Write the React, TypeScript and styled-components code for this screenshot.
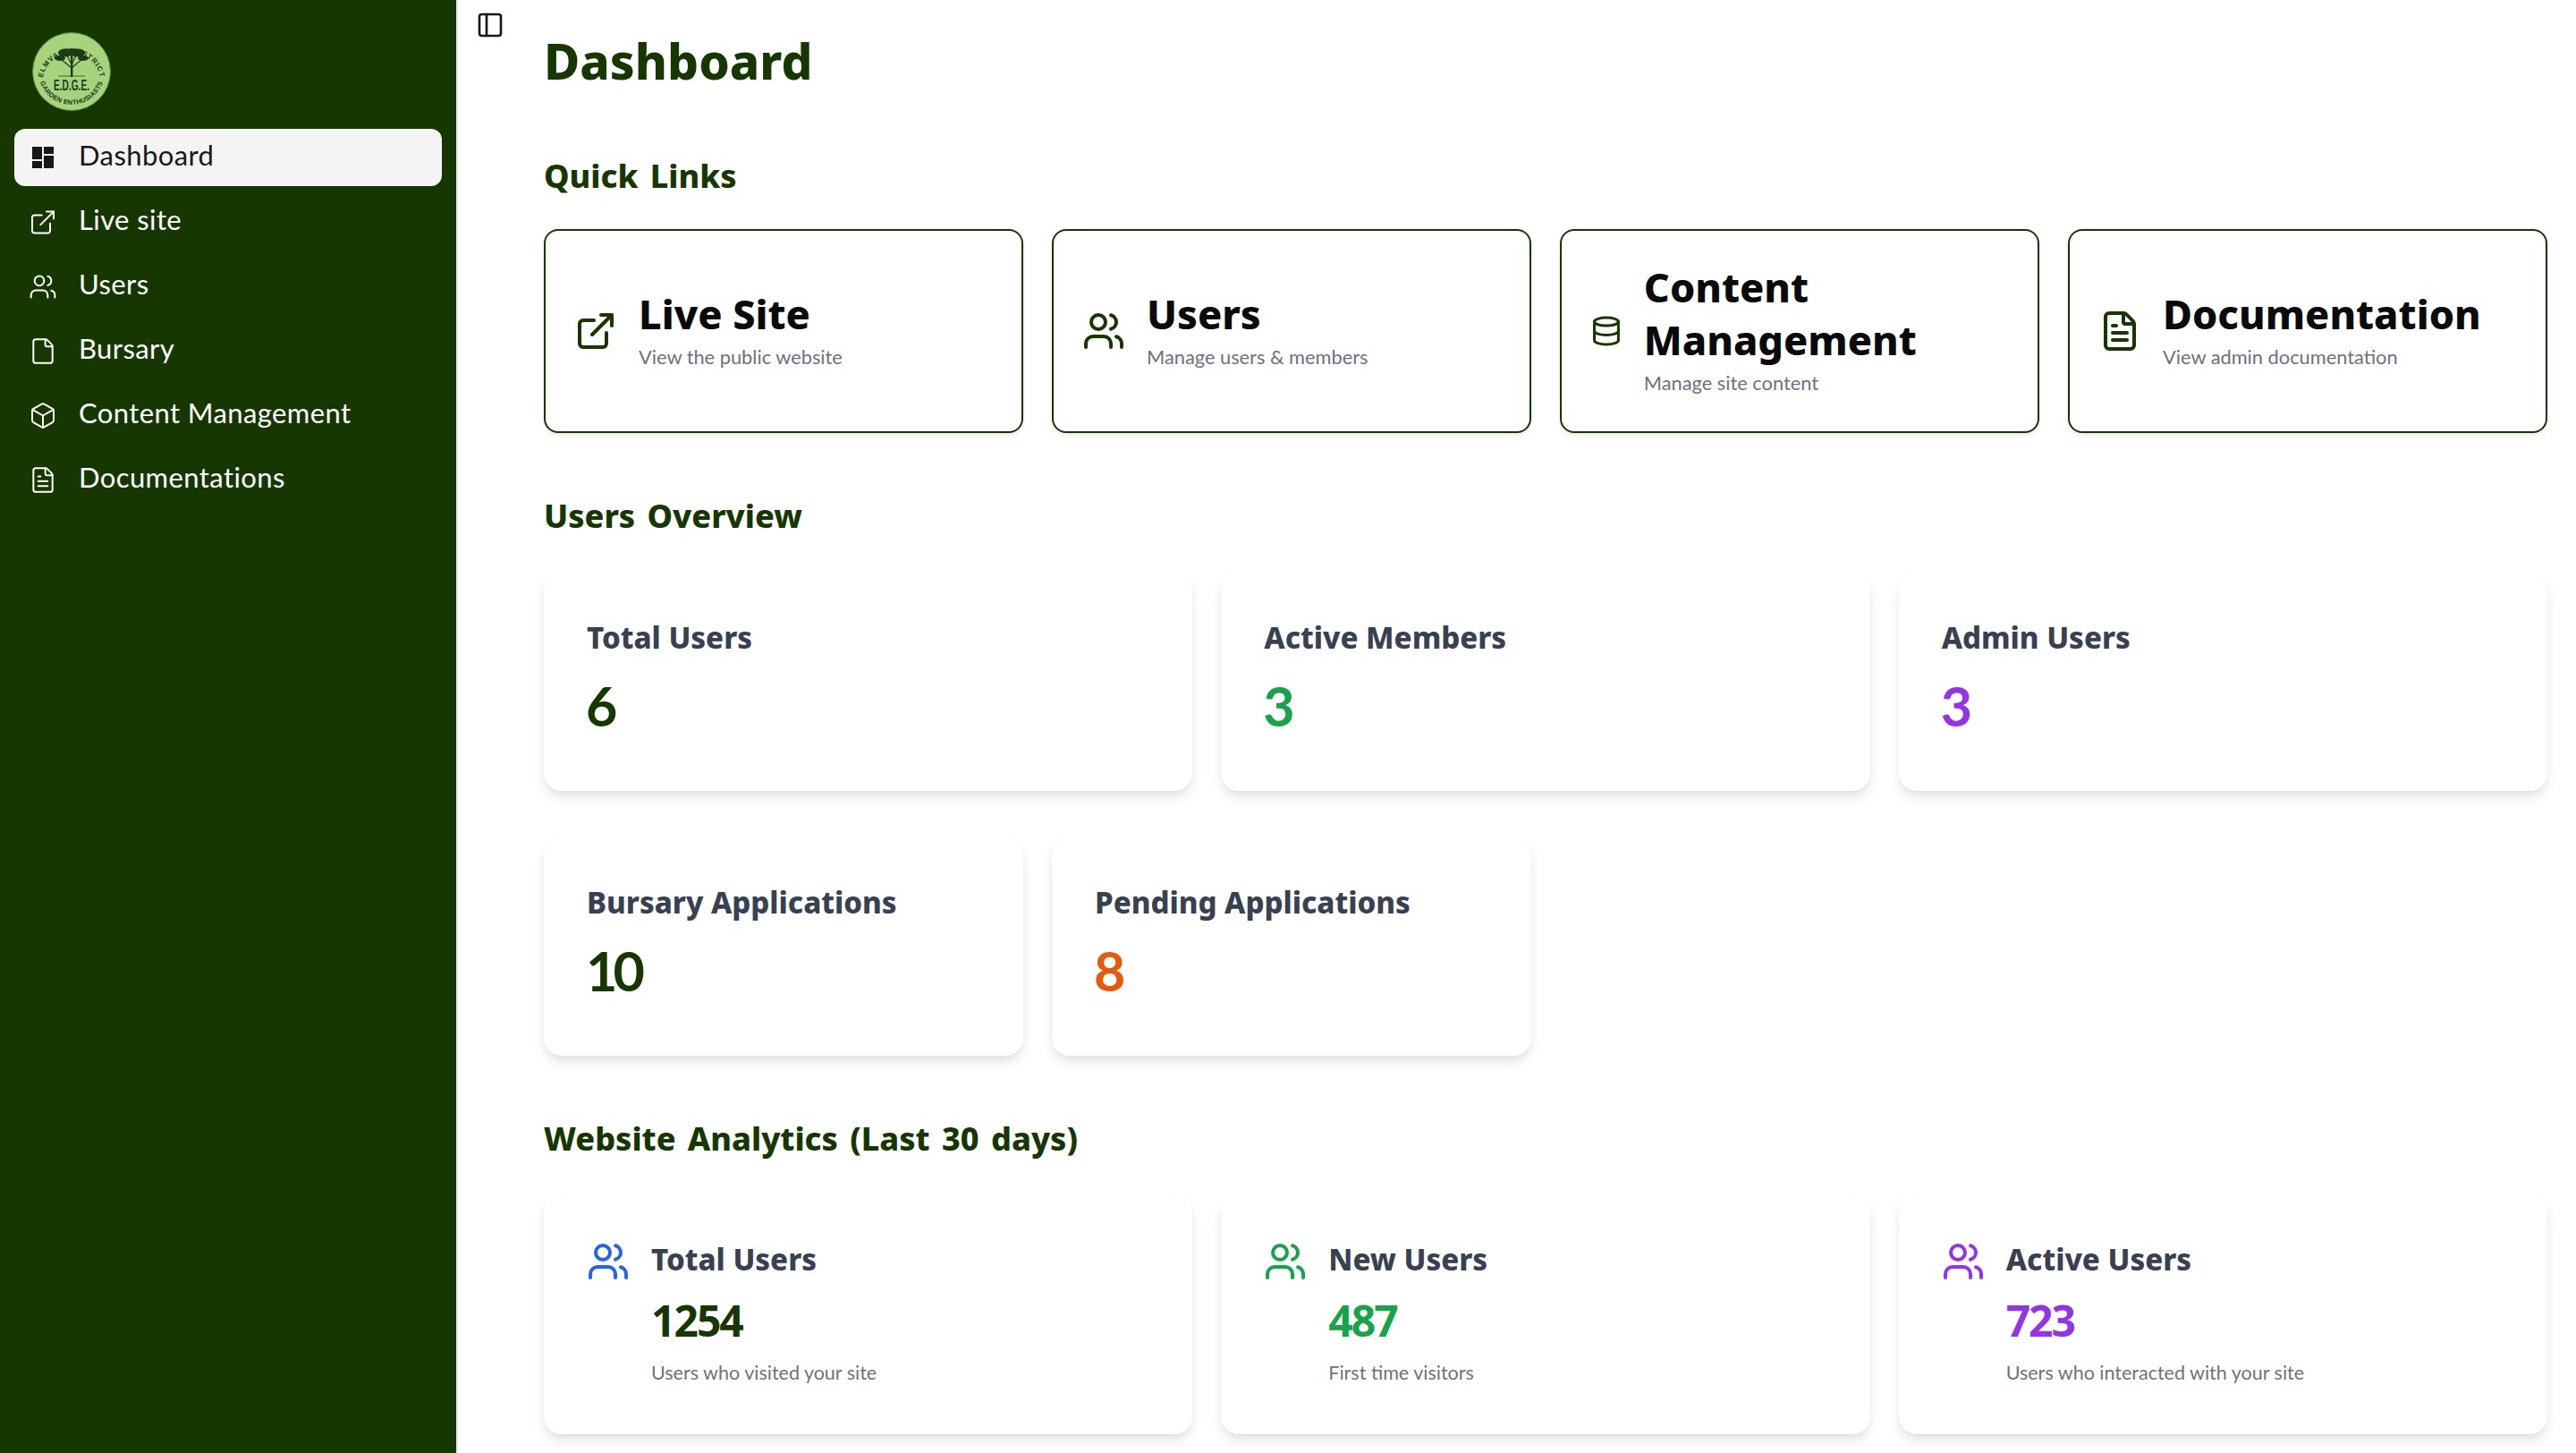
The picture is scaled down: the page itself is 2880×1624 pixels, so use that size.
import React from "react";
import styled, { createGlobalStyle } from "styled-components";
import { ExternalLink, Users, File, Box, FileText, PanelLeft, Database } from "lucide-react";

const HEAD = `"Noto Sans", "DejaVu Sans", sans-serif`;
const BODY = `"Lato", "Noto Sans", sans-serif`;
const GREEN = "#163800";

const Global = createGlobalStyle`
  html, body { margin: 0; padding: 0; background: #fff; overflow: hidden; }
  #root { height: 1624px; overflow: hidden; }
  * { box-sizing: border-box; }
`;

const Shell = styled.div`
  display: flex;
  width: 2880px;
  height: 1624px;
  font-family: ${BODY};
`;
const Sidebar = styled.aside`
  width: 512px;
  flex: none;
  background: ${GREEN};
  border-right: 2px solid #e5e7eb;
  padding: 36px 16px 0;
`;
const LogoWrap = styled.div`
  width: 88px;
  height: 88px;
  margin: 0 0 20px 20px;
`;
const Nav = styled.nav`
  display: flex;
  flex-direction: column;
  gap: 8px;
`;
const NavItem = styled.a<{ $active?: boolean }>`
  display: flex;
  align-items: center;
  gap: 24px;
  height: 64px;
  padding-left: 16px;
  border-radius: 12px;
  font-size: 31px;
  letter-spacing: 0.4px;
  color: ${(p) => (p.$active ? "#18181b" : "#fff")};
  background: ${(p) => (p.$active ? "#f4f4f5" : "transparent")};
`;
const NavLabel = styled.span`
  padding-bottom: 6px;
`;
const NavIcon = styled.span`
  width: 32px;
  height: 32px;
  flex: none;
  display: flex;
  align-items: center;
  justify-content: center;
`;
const Main = styled.main`
  flex: 1;
  min-width: 0;
  padding: 12px 32px 0 20px;
`;
const Toggle = styled.button`
  display: block;
  width: 32px;
  height: 32px;
  padding: 0;
  border: 0;
  background: none;
  color: #18181b;
`;
const Content = styled.div`
  padding-left: 76px;
`;
const Title = styled.h1`
  margin: -8px 0 0;
  font: 800 55px/64px ${HEAD};
  color: ${GREEN};
`;
const Heading = styled.h2<{ $top: number }>`
  margin: ${(p) => p.$top}px 0 0;
  font: 800 36px/48px ${HEAD};
  word-spacing: 4px;
  color: ${GREEN};
`;
const LinkGrid = styled.div`
  display: grid;
  grid-template-columns: repeat(4, 1fr);
  gap: 32px;
  margin-top: 35px;
`;
const LinkCard = styled.a`
  display: flex;
  align-items: center;
  gap: 24px;
  height: 228px;
  padding: 0 32px;
  border: 2px solid ${GREEN};
  border-radius: 16px;
  box-shadow: 0 2px 4px rgba(0, 0, 0, 0.1);
  color: ${GREEN};
`;
const LinkText = styled.div`
  padding-bottom: 6px;
`;
const LinkTitle = styled.div`
  font: 800 45px/59px ${HEAD};
  color: #0a0a0a;
`;
const LinkSub = styled.div`
  margin-top: 4px;
  font: 400 21.8px/30px ${BODY};
  color: #6b7280;
`;
const StatGrid = styled.div<{ $cols: number; $top: number }>`
  display: grid;
  grid-template-columns: repeat(${(p) => p.$cols}, 1fr);
  gap: 32px;
  margin-top: ${(p) => p.$top}px;
`;
const StatCard = styled.div<{ $h: number }>`
  height: ${(p) => p.$h}px;
  padding: 51px 48px 0;
  border-radius: 20px;
  background: #fff;
  box-shadow: 0 8px 14px -2px rgba(0, 0, 0, 0.12), 0 2px 6px -2px rgba(0, 0, 0, 0.05);
`;
const StatLabel = styled.div`
  font: 800 33px/44px ${HEAD};
  color: #374151;
`;
const StatValue = styled.div<{ $color: string }>`
  margin: 18px 0 0 -1px;
  font: 700 61px/72px ${BODY};
  letter-spacing: -5px;
  color: ${(p) => p.$color};
`;
const AnalyticsRow = styled.div`
  display: flex;
  gap: 24px;
`;
const AnalyticsIcon = styled.div<{ $color: string }>`
  flex: none;
  width: 48px;
  height: 48px;
  color: ${(p) => p.$color};
`;
const AnalyticsValue = styled.div<{ $color: string }>`
  margin-top: 18px;
  font: 700 48px/56px ${HEAD};
  letter-spacing: -2px;
  color: ${(p) => p.$color};
`;
const AnalyticsSub = styled.div`
  margin-top: 15px;
  font: 400 21.5px/30px ${BODY};
  color: #6b7280;
`;

const Logo = () => (
  <svg viewBox="0 0 88 88" width="88" height="88">
    <defs>
      <path id="logoTop" d="M12.1 50 A32.5 32.5 0 0 1 75.9 50" />
      <path id="logoBottom" d="M7.9 52 A37 37 0 0 0 80.1 52" />
    </defs>
    <circle cx="44" cy="44" r="43.5" fill="#a6d47c" stroke="#5d7f45" strokeWidth="1" />
    <text fontFamily="Liberation Sans, sans-serif" fontWeight="700" fontSize="8" fill="#1e3517" letterSpacing="0.9">
      <textPath href="#logoTop" startOffset="50%" textAnchor="middle">ELMVALE DISTRICT</textPath>
    </text>
    <text fontFamily="Liberation Sans, sans-serif" fontWeight="700" fontSize="7.4" fill="#1e3517" letterSpacing="0.3">
      <textPath href="#logoBottom" startOffset="50%" textAnchor="middle">GARDEN ENTHUSIASTS</textPath>
    </text>
    <g fill="#1f3a18">
      <ellipse cx="37" cy="23" rx="8" ry="4.5" />
      <ellipse cx="51" cy="23" rx="8" ry="4.5" />
      <ellipse cx="31" cy="29" rx="6" ry="3" />
      <ellipse cx="57" cy="29" rx="6" ry="3" />
      <ellipse cx="44" cy="21" rx="5" ry="3" />
      <rect x="43" y="24" width="2.4" height="26" />
    </g>
    <path d="M44 40 L32 30 M44 40 L56 30 M44 36 L39 26 M44 36 L49 26" stroke="#1f3a18" strokeWidth="1.2" fill="none" />
    <path d="M29 49h30" stroke="#1f3a18" strokeWidth="0.7" />
    <text x="44" y="65" textAnchor="middle" textLength="40" lengthAdjust="spacingAndGlyphs" fontFamily="Liberation Sans, sans-serif" fontWeight="700" fontSize="17" fill="#1f3a18">E.D.G.E.</text>
  </svg>
);

const DashIcon = () => (
  <svg viewBox="0 0 24 24" width="24" height="24" fill="#18181b">
    <rect x="0" y="0" width="11" height="14" />
    <rect x="13" y="0" width="11" height="8" />
    <rect x="13" y="10" width="11" height="14" />
    <rect x="0" y="16" width="11" height="8" />
  </svg>
);

const nav = [
  { label: "Live site", icon: ExternalLink },
  { label: "Users", icon: Users },
  { label: "Bursary", icon: File },
  { label: "Content Management", icon: Box },
  { label: "Documentations", icon: FileText },
];

const links = [
  { title: "Live Site", sub: "View the public website", icon: ExternalLink, size: 48 },
  { title: "Users", sub: "Manage users & members", icon: Users, size: 48 },
  { title: "Content Management", sub: "Manage site content", icon: Database, size: 44 },
  { title: "Documentation", sub: "View admin documentation", icon: FileText, size: 48 },
];

const analytics = [
  { label: "Total Users", value: "1254", sub: "Users who visited your site", color: GREEN, icon: "#2563eb" },
  { label: "New Users", value: "487", sub: "First time visitors", color: "#16a34a", icon: "#16a34a" },
  { label: "Active Users", value: "723", sub: "Users who interacted with your site", color: "#9333ea", icon: "#9333ea" },
];

export default function App() {
  return (
    <Shell>
      <Global />
      <Sidebar>
        <LogoWrap><Logo /></LogoWrap>
        <Nav>
          <NavItem $active>
            <NavIcon><DashIcon /></NavIcon>
            <NavLabel>Dashboard</NavLabel>
          </NavItem>
          {nav.map(({ label, icon: Icon }) => (
            <NavItem key={label}>
              <NavIcon><Icon size={33} strokeWidth={1.5} /></NavIcon>
              <NavLabel>{label}</NavLabel>
            </NavItem>
          ))}
        </Nav>
      </Sidebar>
      <Main>
        <Toggle><PanelLeft size={32} strokeWidth={2} /></Toggle>
        <Content>
          <Title>Dashboard</Title>
          <Heading $top={73}>Quick Links</Heading>
          <LinkGrid>
            {links.map(({ title, sub, icon: Icon, size }) => (
              <LinkCard key={title}>
                <Icon size={size} strokeWidth={2} />
                <LinkText>
                  <LinkTitle>{title}</LinkTitle>
                  <LinkSub>{sub}</LinkSub>
                </LinkText>
              </LinkCard>
            ))}
          </LinkGrid>
          <Heading $top={69}>Users Overview</Heading>
          <StatGrid $cols={3} $top={39}>
            <StatCard $h={244}>
              <StatLabel>Total Users</StatLabel>
              <StatValue $color={GREEN}>6</StatValue>
            </StatCard>
            <StatCard $h={244}>
              <StatLabel>Active Members</StatLabel>
              <StatValue $color="#16a34a">3</StatValue>
            </StatCard>
            <StatCard $h={244}>
              <StatLabel>Admin Users</StatLabel>
              <StatValue $color="#9333ea">3</StatValue>
            </StatCard>
          </StatGrid>
          <StatGrid $cols={4} $top={52}>
            <StatCard $h={244}>
              <StatLabel>Bursary Applications</StatLabel>
              <StatValue $color={GREEN}>10</StatValue>
            </StatCard>
            <StatCard $h={244}>
              <StatLabel>Pending Applications</StatLabel>
              <StatValue $color="#ea580c">8</StatValue>
            </StatCard>
          </StatGrid>
          <Heading $top={69}>Website Analytics (Last 30 days)</Heading>
          <StatGrid $cols={3} $top={38}>
            {analytics.map((a) => (
              <StatCard $h={268} key={a.label}>
                <AnalyticsRow>
                  <AnalyticsIcon $color={a.icon}><Users size={48} strokeWidth={2} /></AnalyticsIcon>
                  <div>
                    <StatLabel>{a.label}</StatLabel>
                    <AnalyticsValue $color={a.color}>{a.value}</AnalyticsValue>
                    <AnalyticsSub>{a.sub}</AnalyticsSub>
                  </div>
                </AnalyticsRow>
              </StatCard>
            ))}
          </StatGrid>
        </Content>
      </Main>
    </Shell>
  );
}
